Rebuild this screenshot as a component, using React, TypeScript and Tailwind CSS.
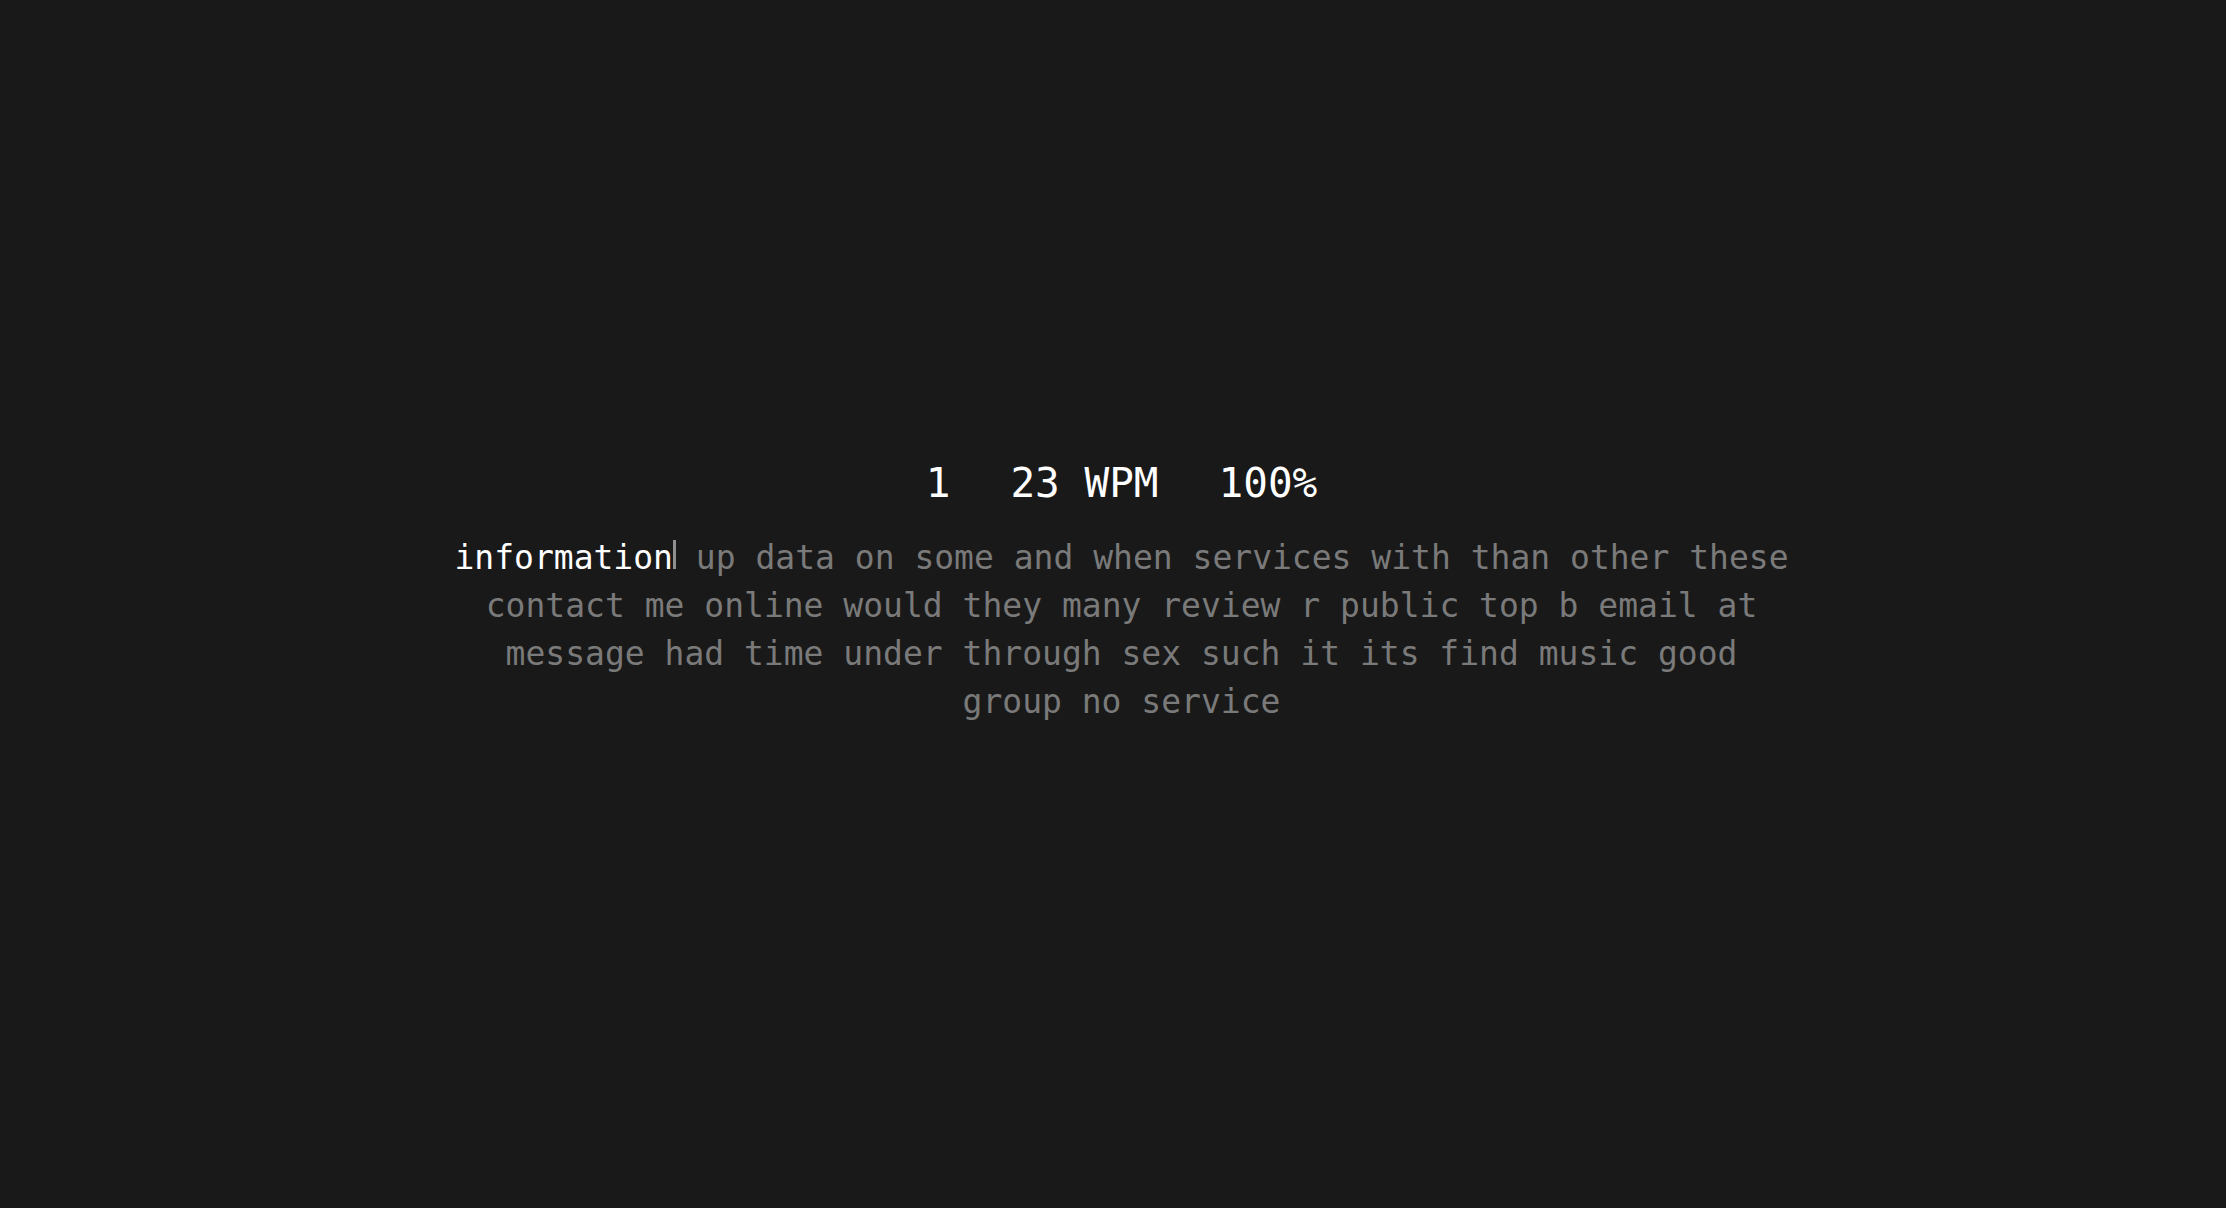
const typed = "information";
const upcoming =
  "up data on some and when services with than other these contact me online would they many review r public top b email at message had time under through sex such it its find music good group no service";

export default function App() {
  return (
    <div className="min-h-screen w-full bg-[#191919] flex flex-col items-center justify-center pl-[17px] pb-[24px] font-['DejaVu_Sans_Mono',monospace]">
      <div className="flex items-center gap-[60px] text-[41px] leading-[48px] text-white">
        <span>1</span>
        <span>23 WPM</span>
        <span>100%</span>
      </div>

      <p className="mt-[27px] w-[1348px] text-center text-[33px] leading-[48px] text-[#7a7a7a]">
        <span className="text-white">{typed}</span>
        <span className="inline-block w-[3px] h-[29px] bg-[#8f8f8f] align-baseline" />{" "}
        {upcoming}
      </p>
    </div>
  );
}
